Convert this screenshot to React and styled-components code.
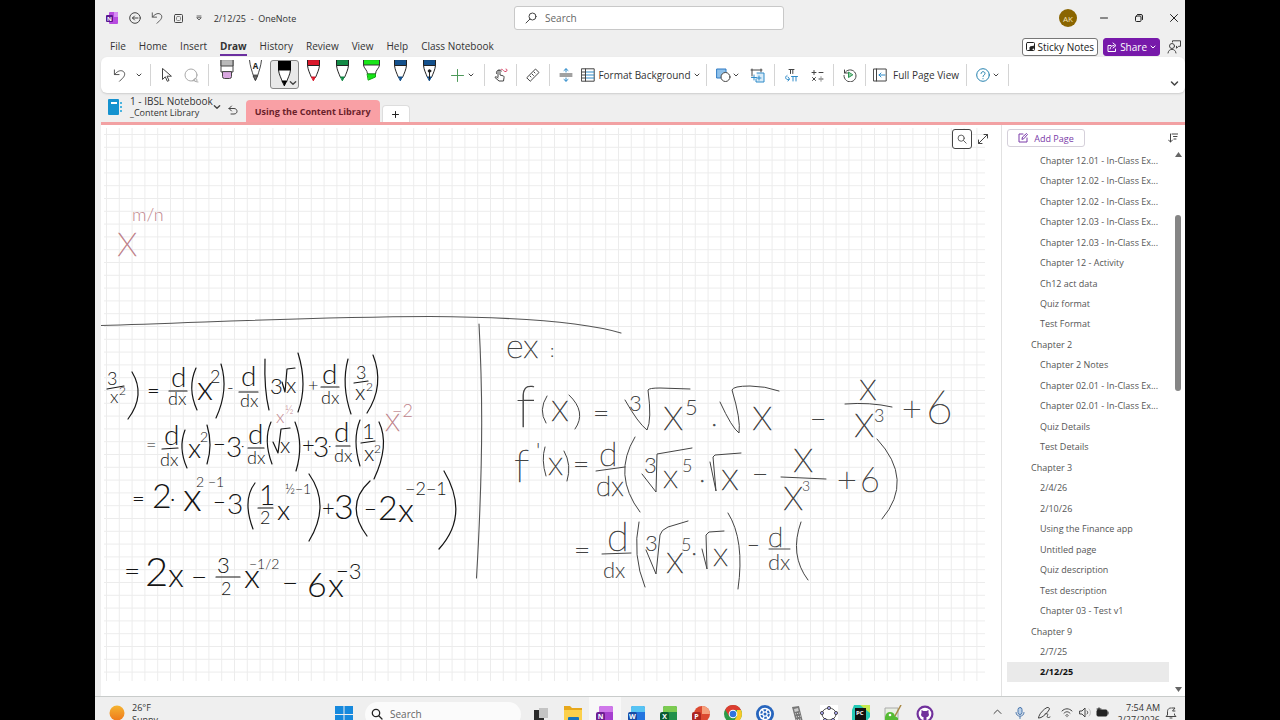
import React from 'react';
import styled, { createGlobalStyle, css } from 'styled-components';

const GlobalStyle = createGlobalStyle`
  * {
    box-sizing: border-box;
  }
  body {
    margin: 0;
    background: #000;
    color: #333;
    font-family: 'Open Sans', 'Noto Sans', sans-serif;
    font-size: 10px;
  }
  button, input {
    font: inherit;
    color: inherit;
    border: 0;
    background: none;
    padding: 0;
    margin: 0;
  }
  ul {
    list-style: none;
    margin: 0;
    padding: 0;
  }
  a {
    color: inherit;
    text-decoration: none;
  }
  svg {
    display: block;
    flex: none;
  }
`;

const Desktop = styled.div`
  height: 100vh;
  margin: 0 95px;
  display: flex;
  flex-direction: column;
  overflow: hidden;
  background: #efefef;
`;

const TitleBar = styled.header`
  height: 36px;
  display: grid;
  grid-template-columns: 419fr 270px 401fr;
  align-items: center;
`;

const TitleLeft = styled.div`
  display: flex;
  align-items: center;
  padding-left: 10px;
`;

const TitleButton = styled.button`
  width: ${(p) => p.$w || 21}px;
  height: 20px;
  display: flex;
  align-items: center;
  justify-content: center;
`;

const DocName = styled.span`
  margin-left: 4px;
  font-size: 9px;
  white-space: pre;
`;

const SearchBox = styled.label`
  height: 24px;
  display: flex;
  align-items: center;
  gap: 8px;
  padding: 0 10px;
  background: #fff;
  border: 1px solid #c8c8c8;
  border-radius: 3px;

  input {
    width: 100%;
    outline: 0;
  }
  input::placeholder {
    color: #666;
    opacity: 1;
  }
`;

const TitleRight = styled.div`
  display: flex;
  align-items: center;
  justify-content: flex-end;
  gap: 12px;
`;

const Avatar = styled.button`
  width: 18px;
  height: 18px;
  margin-right: 3px;
  border-radius: 50%;
  background: #8a6500;
  color: #f4e3b5;
  font-size: 8px;
`;

const MenuBar = styled.nav`
  height: 21px;
  display: flex;
  align-items: center;
  gap: 13px;
  padding: 0 2px 0 15px;
`;

const MenuItem = styled.a`
  padding-top: 2px;
  line-height: 15px;
  border-bottom: 2px solid transparent;
  ${(p) => p.$active && css`
    font-weight: 700;
    border-color: #6b2fa0;
  `}
`;

const MenuActions = styled.div`
  display: flex;
  align-items: center;
  gap: 5px;
  margin-left: auto;
`;

const ActionButton = styled.button`
  height: 18px;
  display: flex;
  align-items: center;
  gap: ${(p) => (p.$primary ? 3 : 2)}px;
  padding: 0 3px;
  border: 1px solid ${(p) => (p.$primary ? '#7719aa' : '#777')};
  border-radius: 3px;
  background: ${(p) => (p.$primary ? '#7719aa' : '#fff')};
  color: ${(p) => (p.$primary ? '#fff' : '#222')};
`;

const Ribbon = styled.div`
  height: 36px;
  display: flex;
  margin-left: 6px;
  padding: 0 4px 0 6px;
  background: #fff;
  border-radius: 6px;
  box-shadow: 0 1px 2px #ccc;
`;

const Tool = styled.button`
  width: ${(p) => p.$w || 26}px;
  display: flex;
  align-items: center;
  justify-content: center;
  gap: ${(p) => p.$gap || 0}px;
  white-space: nowrap;
`;

const PenTool = styled.button`
  width: 29px;
  height: 29px;
  margin-top: 3px;
  display: flex;
  justify-content: center;
  position: relative;
  ${(p) => p.$active && css`
    background: #e9e9e9;
    border: 1px solid #888;
    border-radius: 3px;
  `}
`;

const PenArrow = styled.span`
  position: absolute;
  right: 1px;
  bottom: 1px;
`;

const Separator = styled.span`
  width: 1px;
  margin: 7px 3px;
  background: #d4d4d4;
`;

const Collapse = styled.button`
  margin-left: auto;
  padding: 16px 2px 0 0;
`;

const TabStrip = styled.div`
  height: 32px;
  margin-left: 6px;
  display: flex;
  align-items: flex-end;
  border-bottom: 3px solid #f2a1a3;
`;

const Notebook = styled.button`
  height: 28px;
  display: flex;
  align-items: center;
  padding: 0 5px 2px 7px;
  text-align: left;
`;

const NotebookName = styled.span`
  display: flex;
  flex-direction: column;
  margin-left: 8px;
  line-height: 12px;

  small {
    font-size: 9px;
  }
`;

const BackButton = styled.button`
  height: 24px;
  padding: 0 8px 0 2px;
`;

const Section = styled.button`
  height: 22px;
  padding: 0 9px;
  background: #f9a0a5;
  border-radius: 4px 4px 0 0;
  color: #6b1f2b;
  font-size: 9px;
  font-weight: 700;
`;

const AddSection = styled.button`
  width: 28px;
  height: 17px;
  margin-left: 2px;
  display: flex;
  align-items: center;
  justify-content: center;
  background: #fff;
  border: 1px solid #ddd;
  border-bottom: 0;
  border-radius: 4px 4px 0 0;
`;

const Workspace = styled.main`
  flex: 1;
  min-height: 0;
  display: flex;
  margin-left: 6px;
  background: #fff;
`;

const Page = styled.section`
  flex: 1;
  min-width: 0;
  overflow: hidden;
  position: relative;
`;

const PageTools = styled.div`
  position: absolute;
  top: 4px;
  right: 12px;
  display: flex;
  align-items: center;
  gap: 5px;
`;

const FindButton = styled.button`
  width: 20px;
  height: 20px;
  display: flex;
  align-items: center;
  justify-content: center;
  background: #fff;
  border: 1px solid #444;
  border-radius: 3px;
`;

const PageList = styled.aside`
  flex: 0 0 184px;
  display: flex;
  border-left: 1px solid #e2e2e2;
`;

const PageColumn = styled.div`
  flex: 1;
  display: flex;
  flex-direction: column;
  padding: 4px 2px 14px 5px;
`;

const AddPage = styled.button`
  width: 78px;
  height: 18px;
  margin-bottom: 3px;
  display: flex;
  align-items: center;
  justify-content: center;
  gap: 6px;
  border: 1px solid #d5d0da;
  border-radius: 3px;
  color: #7a3aa8;
  font-size: 9px;
`;

const Pages = styled.ul`
  flex: 1;
  display: flex;
  flex-direction: column;
`;

const PageItem = styled.li`
  flex: 1 1 20px;
  display: flex;
  align-items: center;
  padding-left: ${(p) => (p.$level ? 33 : 24)}px;
  font-size: 9px;
  color: #555;
  white-space: nowrap;
  ${(p) => p.$active && css`
    background: #eaeaea;
    color: #111;
    font-weight: 700;
  `}
`;

const ScrollColumn = styled.div`
  width: 14px;
  display: flex;
  flex-direction: column;
  align-items: center;
  padding: 8px 0 4px;
`;

const SortButton = styled.button`
  align-self: flex-end;
  padding-right: 7px;
  margin-bottom: 9px;
`;

const ScrollTrack = styled.div`
  flex: 1;
  padding-top: 58px;
`;

const ScrollThumb = styled.div`
  width: 6px;
  height: 34%;
  min-height: 176px;
  border-radius: 3px;
  background: #858585;
`;

const Taskbar = styled.footer`
  flex: 0 0 24px;
  display: flex;
  align-items: flex-start;
  overflow: hidden;
  border-top: 1px solid #c9cccb;
  background: #efefef;
`;

const Weather = styled.button`
  display: flex;
  gap: 7px;
  padding: 5px 0 0 14px;
  width: 233px;
  text-align: left;
  font-size: 9px;
  line-height: 12px;

  svg {
    margin-top: 3px;
  }
  span span {
    display: block;
  }
`;

const TaskSearch = styled.label`
  width: 156px;
  height: 25px;
  margin: 5px 4px 0 5px;
  display: flex;
  align-items: center;
  gap: 7px;
  padding: 0 6px 2px;
  border-radius: 13px;
  background: #fbfbfb;

  input {
    width: 100%;
    outline: 0;
  }
  input::placeholder {
    color: #666;
    opacity: 1;
  }
`;

const TaskButton = styled.button`
  width: 32px;
  padding-top: 8px;
  display: flex;
  justify-content: center;
  background: ${(p) => (p.$active ? '#f8f8f8' : 'none')};
`;

const Tray = styled.div`
  margin-left: auto;
  display: flex;
  padding-right: 4px;
`;

const TrayButton = styled.button`
  width: ${(p) => p.$w || 18}px;
  padding-top: 10px;
  display: flex;
  justify-content: center;
`;

const Clock = styled.button`
  width: 48px;
  padding-top: 5px;
  text-align: right;
  font-size: 9px;
  line-height: 12px;

  span {
    display: block;
  }
`;

const Icon = ({ w = 16, h = w, box = `0 0 ${w} ${h}`, color = '#444', sw = 1, children }) => (
  <svg width={w} height={h} viewBox={box} fill="none" stroke={color} strokeWidth={sw} strokeLinecap="round" strokeLinejoin="round" aria-hidden="true">
    {children}
  </svg>
);

const Chevron = ({ size = 6, color = '#444' }) => (
  <Icon w={size} box="0 0 6 6" color={color}><path d="M1 2l2 2 2-2" /></Icon>
);

const Undo = ({ size = 13 }) => (
  <Icon w={size} box="0 0 14 14"><path d="M1.500 1V6h5M1.800 5.800C4 3 7.500.8 10.500 2.300c3 1.600 2.600 5-.3 7.700L7 13.200" /></Icon>
);

const Magnifier = ({ size = 12, color = '#444', sw = 1, flip }) => (
  <Icon w={size} box="0 0 12 12" color={color} sw={sw}>
    {flip ? <><circle cx="7.500" cy="4.500" r="3.500" /><path d="M5 7L1 11" /></> : <><circle cx="5" cy="5" r="3.700" /><path d="M8 8l3 3" /></>}
  </Icon>
);

const Pen = ({ color, label, fountain }) => (
  <PenTool aria-label={label}>
    <Icon w={15} h={23} color="#222">
      <path d="M1.500 0v5.500c.5 4.500 2.600 8.500 4 12h4c1.400-3.500 3.500-7.500 4-12V0" fill="#fff" />
      <path d="M1.500 0v5.500h12V0z" fill={color} />
      <path d="M5.800 17h3.400L7.500 20.500z" fill={color} stroke={color} />
      {fountain && <><circle cx="7.500" cy="11" r="1.300" fill="#222" /><path d="M7.500 11v8" /></>}
    </Icon>
  </PenTool>
);

// [x, baseline, size, content]
const leftInk = [
  [107, 385, 18, '3'], [110, 403, 18, 'x'], [119, 395, 12, '2'], [147, 398, 22, '='],
  [171, 387, 28, 'd'], [168, 405, 18, 'dx'], [197, 400, 34, 'x'], [210, 383, 18, '2'],
  [227, 394, 18, '-'], [241, 386, 28, 'd'], [240, 407, 18, 'dx'], [270, 394, 22, '3'],
  [286, 393, 22, 'x'], [308, 391, 18, '+'], [322, 384, 28, 'd'], [321, 404, 18, 'dx'],
  [356, 379, 18, '3'], [355, 400, 22, 'x'], [366, 391, 12, '2'],
  [146, 451, 18, '='], [164, 445, 28, 'd'], [160, 466, 18, 'dx'], [188, 458, 28, 'x'],
  [200, 442, 14, '2'], [213, 452, 22, '−'], [226, 457, 28, '3'], [241, 451, 14, '·'],
  [248, 444, 28, 'd'], [247, 464, 18, 'dx'], [280, 453, 22, 'x'], [302, 453, 22, '+'],
  [313, 457, 28, '3'], [328, 451, 14, '·'], [334, 442, 28, 'd'], [334, 462, 18, 'dx'],
  [362, 439, 22, '1'], [364, 461, 22, 'x'], [374, 453, 12, '2'],
  [132, 506, 22, '='], [152, 508, 34, '2'], [170, 506, 22, '·'], [183, 511, 40, 'x'],
  [196, 487, 14, '2 −1'], [213, 510, 22, '−'], [227, 514, 28, '3'], [259, 505, 28, '1'],
  [260, 524, 18, '2'], [277, 520, 28, 'x'], [285, 494, 14, '½−1'], [322, 516, 22, '+'],
  [334, 519, 34, '3'], [364, 517, 22, '−'], [378, 520, 34, '2'], [398, 522, 34, 'x'],
  [405, 495, 18, '−2−1'],
  [124, 581, 28, '='], [145, 586, 40, '2'], [168, 587, 34, 'x'], [191, 587, 28, '−'],
  [217, 573, 22, '3'], [221, 595, 18, '2'], [244, 588, 34, 'x'], [249, 569, 14, '−1/2'],
  [282, 593, 28, '−'], [307, 597, 34, '6'], [328, 597, 34, 'x'], [336, 579, 22, '−3'],
];

const rightInk = [
  [506, 358, 34, 'ex'], [550, 357, 18, ':'],
  [516, 427, 58, 'f'], [551, 421, 40, 'x'], [593, 423, 28, '='], [629, 411, 22, '3'],
  [663, 430, 46, 'x'], [685, 415, 22, '5'], [711, 426, 28, '.'], [752, 430, 46, 'x'],
  [810, 429, 28, '−'], [859, 400, 40, 'x'], [854, 437, 46, 'x'], [874, 422, 18, '3'],
  [902, 421, 34, '+'], [926, 424, 46, '6'],
  [514, 482, 46, 'f'], [536, 458, 22, "'"], [548, 475, 34, 'x'], [573, 474, 28, '='],
  [599, 466, 34, 'd'], [596, 496, 28, 'dx'], [644, 473, 22, '3'], [663, 488, 34, 'x'],
  [682, 472, 18, '5'], [699, 482, 28, '.'], [721, 490, 40, 'x'], [752, 484, 28, '−'],
  [793, 472, 46, 'x'], [783, 510, 46, 'x'], [802, 491, 14, '3'], [837, 492, 34, '+'],
  [860, 492, 34, '6'],
  [574, 560, 28, '='], [607, 551, 40, 'd'], [603, 578, 22, 'dx'], [645, 551, 22, '3'],
  [666, 573, 40, 'x'], [681, 551, 18, '5'], [691, 562, 28, '·'], [713, 566, 34, 'x'],
  [747, 553, 22, '−'], [768, 547, 28, 'd'], [768, 570, 22, 'dx'],
];

const leftStrokes = [
  'M132 372Q146 395 128 419', 'M107 389l17-3', 'M169 391h18', 'M196 368Q187 388 197 410',
  'M221 364Q229 390 216 418', 'M239 392h19', 'M265 359Q264 390 269 410',
  'M282 382l3 10 2-23 8-1', 'M298 353Q308 385 298 412', 'M321 387h18', 'M348 359Q341 385 351 414',
  'M354 383l14-2', 'M373 355Q385 385 367 413',
  'M162 449l16-1', 'M185 430Q178 448 187 468', 'M207 425Q213 445 207 464', 'M248 448h16',
  'M271 422Q263 440 272 464', 'M273 442l5 11 3-24 9-1', 'M295 422Q304 445 296 471',
  'M336 446h14', 'M360 420Q352 440 360 466', 'M361 443l14-2', 'M379 422Q390 445 374 479',
  'M255 483Q242 500 253 529', 'M258 508h15', 'M309 474Q331 505 309 541',
  'M370 481Q344 505 367 536', 'M444 471Q470 515 439 549', 'M216 577h24',
];

const rightStrokes = [
  'M547 396Q538 410 546 423', 'M569 395Q587 412 575 429',
  'M625 400Q638 423 647 430 652 420 648 390q1-2 12-2l30 1',
  'M720 402Q732 428 739 433 741 420 732 390q1-4 18-4 15 0 29 5', 'M845 404Q870 402 892 407',
  'M545 447Q541 460 546 476', 'M564 451Q572 465 567 481', 'M596 471l29-4',
  'M635 437Q612 475 640 512', 'M642 474l14 18 1-38 35-6', 'M710 462l6 29-3-34 2-2 26-2',
  'M781 477l45 2', 'M877 439Q915 480 882 519',
  'M602 554l29-1', 'M639 522Q632 555 645 587', 'M646 550l10 24 4-39q1-5 8-8l20-6',
  'M728 513Q745 540 738 589', 'M702 549l5 20-1-34 3-3 15-1', 'M769 549h21',
  'M801 522Q789 555 808 580',
];

// the hairline cut is too faint alone, so large letters get a pen-width stroke
const InkText = styled.text`
  font-family: Lato, 'Open Sans', sans-serif;
  font-weight: ${(p) => (p.$thin ? 100 : 300)};
  stroke-width: ${(p) => (p.$thin ? 0.6 : 0)};
`;

const InkLayer = ({ color, texts, strokes = [], width = 1.3, thinFrom = 46 }) => (
  <g fill={color} stroke={color}>
    {texts.map(([x, y, size, content]) => (
      <InkText key={`${x}-${y}`} x={x} y={y} fontSize={size} $thin={size >= thinFrom}>{content}</InkText>
    ))}
    <g fill="none" strokeWidth={width} strokeLinecap="round" strokeLinejoin="round">
      {strokes.map((d) => <path key={d} d={d} />)}
    </g>
  </g>
);

const Canvas = () => (
  <svg width="884" height="556" viewBox="101 125 884 556" role="img" aria-label="Handwritten notes">
    <defs>
      <pattern id="grid" x="106" y="134" width="12.800" height="12.800" patternUnits="userSpaceOnUse">
        <path d="M.5 0v12.800M0 .5h12.800" stroke="#ececec" strokeWidth="1" />
      </pattern>
    </defs>
    <rect x="104" y="128" width="881" height="553" fill="url(#grid)" />
    <g fill="none" stroke="#555" strokeWidth="1.100" strokeLinecap="round">
      <path d="M101 325.500C200 323 300 317 430 316.500 500 317 580 321 621 333" />
      <path d="M479 324C482 380 484 450 476.500 578" />
    </g>
    <InkLayer color="#c0848c" thinFrom={28} texts={[[132, 221, 18, 'm/n'], [117, 256, 46, 'x'], [276, 423, 18, 'x'], [285, 414, 12, '½'], [385, 431, 34, 'x'], [392, 417, 18, '−2']]} />
    <InkLayer color="#151515" texts={leftInk} strokes={leftStrokes} width={1.2} />
    <InkLayer color="#444" thinFrom={28} texts={rightInk} strokes={rightStrokes} width={1} />
  </svg>
);

const pages = [
  ['Chapter 12.01 - In-Class Ex...', 1], ['Chapter 12.02 - In-Class Ex...', 1],
  ['Chapter 12.02 - In-Class Ex...', 1], ['Chapter 12.03 - In-Class Ex...', 1],
  ['Chapter 12.03 - In-Class Ex...', 1], ['Chapter 12 - Activity', 1],
  ['Ch12 act data', 1], ['Quiz format', 1], ['Test Format', 1],
  ['Chapter 2', 0], ['Chapter 2 Notes', 1], ['Chapter 02.01 - In-Class Ex...', 1],
  ['Chapter 02.01 - In-Class Ex...', 1], ['Quiz Details', 1], ['Test Details', 1],
  ['Chapter 3', 0], ['2/4/26', 1], ['2/10/26', 1], ['Using the Finance app', 1],
  ['Untitled page', 1], ['Quiz description', 1], ['Test description', 1],
  ['Chapter 03 - Test v1', 1], ['Chapter 9', 0], ['2/7/25', 1], ['2/12/25', 1],
];

const menus = ['File', 'Home', 'Insert', 'Draw', 'History', 'Review', 'View', 'Help', 'Class Notebook'];

const OfficeIcon = ({ letter, dark, mid, light, round }) => (
  <svg width="18" height="20" viewBox="0 0 18 20" aria-hidden="true">
    {round ? (
      <>
        <circle cx="10" cy="9" r="8" fill={mid} />
        <path d="M10 1a8 8 0 0 1 8 8h-8z" fill={light} />
      </>
    ) : (
      <>
        <rect x="3" y="1" width="14" height="17" rx="2" fill={mid} />
        <path d="M5 1h10a2 2 0 0 1 2 2v4H3V3a2 2 0 0 1 2-2z" fill={light} />
      </>
    )}
    <rect x="0" y="7" width="9" height="9" rx="2" fill={dark} />
    <text x="4.500" y="14" textAnchor="middle" fontSize="7" fontWeight="700" fill="#fff">{letter}</text>
  </svg>
);

const TitleRow = () => (
  <TitleBar>
    <TitleLeft>
      <TitleButton $w={14} aria-label="OneNote">
        <svg width="12" height="12" viewBox="0 0 12 12" aria-hidden="true">
          <rect x="3" y="0" width="9" height="12" rx="1" fill="#b84be0" />
          <path d="M8 0h3a1 1 0 0 1 1 1v4H8z" fill="#d68cf3" />
          <rect x="0" y="3" width="7" height="7" rx="1" fill="#5b1590" />
          <text x="3.500" y="9" textAnchor="middle" fontSize="6" fontWeight="700" fill="#fff">N</text>
        </svg>
      </TitleButton>
      <TitleButton $w={32} aria-label="Back">
        <Icon w={12}><circle cx="6" cy="6" r="5.300" /><path d="M9 6H3.500M5.500 4l-2 2 2 2" /></Icon>
      </TitleButton>
      <TitleButton $w={12} aria-label="Undo"><Undo size={12} /></TitleButton>
      <TitleButton $w={30} aria-label="Full page">
        <Icon w={9}><rect x=".5" y=".5" width="8" height="8" rx="1" /><rect x="2.500" y="2.500" width="4" height="4" rx="1" stroke="#888" /></Icon>
      </TitleButton>
      <TitleButton $w={12} aria-label="Customize toolbar">
        <Icon w={6} sw={0.8}><path d="M1 1h4M1 3l2 2 2-2z" /></Icon>
      </TitleButton>
      <DocName>{'  2/12/25  -  OneNote'}</DocName>
    </TitleLeft>
    <SearchBox>
      <Magnifier flip />
      <input type="search" placeholder="Search" aria-label="Search" />
    </SearchBox>
    <TitleRight>
      <Avatar>AK</Avatar>
      <TitleButton $w={23} aria-label="Minimize"><Icon w={8} color="#222"><path d="M.5 4h7" /></Icon></TitleButton>
      <TitleButton $w={23} aria-label="Restore">
        <Icon w={8} color="#222"><rect x=".5" y="2" width="5.500" height="5.500" rx="1" /><path d="M2.500.5H6a1.500 1.500 0 0 1 1.500 1.500v3.500" /></Icon>
      </TitleButton>
      <TitleButton $w={23} aria-label="Close"><Icon w={8} color="#222"><path d="M.5.5l7 7M7.500.5l-7 7" /></Icon></TitleButton>
    </TitleRight>
  </TitleBar>
);

const MenuRow = () => (
  <MenuBar>
    {menus.map((name) => <MenuItem key={name} href="#" $active={name === 'Draw'}>{name}</MenuItem>)}
    <MenuActions>
      <ActionButton>
        <Icon w={9} color="#222"><rect x=".5" y=".5" width="8" height="8" rx="1" /><path d="M4 8.500V5l4.500-1v1L5 8.500z" fill="#222" /></Icon>
        Sticky Notes
      </ActionButton>
      <ActionButton $primary>
        <Icon w={10} color="#fff"><path d="M4 3.500H1v6h7.500V7M3 7c.3-2.500 2-3.500 4-3.500M6 1l3 2.500L6 6" /></Icon>
        Share
        <Chevron color="#fff" />
      </ActionButton>
      <TitleButton $w={18} aria-label="Contact">
        <Icon w={14}><circle cx="5" cy="6" r="2.500" /><path d="M1 13c.5-5 7.500-5 8 0M5.500 2V.8h8v5.500h-2l-2 2v-2" /></Icon>
      </TitleButton>
    </MenuActions>
  </MenuBar>
);

const DrawRibbon = () => (
  <Ribbon>
    <Tool $w={24} aria-label="Undo"><Undo /></Tool>
    <Tool $w={16} aria-label="Undo options"><Chevron /></Tool>
    <Separator />
    <Tool $w={24} aria-label="Select">
      <Icon w={11} h={14}><path d="M1.500.8v10.700l2.800-2.700 2 4.500 1.700-.8-2-4.300h4z" /></Icon>
    </Tool>
    <Tool $w={27} aria-label="Lasso">
      <Icon w={15} color="#aaa"><circle cx="7" cy="7" r="6" /><path d="M9 13c0-3 4-3 4-1s-3 2-3 0c1 1 2 2 4 2" /></Icon>
    </Tool>
    <Separator />
    <PenTool aria-label="Eraser">
      <Icon w={14} h={20} color="#444">
        <path d="M1 0v12h12V0z" fill="#fff" /><path d="M1 0v6h12V0z" fill="#b9b9b9" /><path d="M2.500 12v4.500q0 2 2 2h5q2 0 2-2V12z" fill="#d9a7e0" />
      </Icon>
    </PenTool>
    <PenTool aria-label="Text pen">
      <Icon w={15} h={22} color="#444">
        <path d="M1.500 0C2 6 4 11 5.500 16h4c1.500-5 3.500-10 4-16M5.500 15.500l2 5 2-5z" />
        <path d="M5.500 16h4l-2 4z" fill="#777" />
        <text x="7.500" y="9" textAnchor="middle" fontSize="8" fontWeight="700" fill="#222" stroke="none">A</text>
      </Icon>
    </PenTool>
    <PenTool $active aria-label="Black pen">
      <Icon w={15} h={26} color="#222">
        <path d="M1.500 0v9c.5 4.500 2.600 8 4 12h4c1.400-4 3.500-7.500 4-12V0" fill="#fff" />
        <path d="M1.500 0v9h12V0zM5.500 20h4l-2 4.500z" fill="#000" stroke="#000" />
      </Icon>
      <PenArrow><Chevron size={8} /></PenArrow>
    </PenTool>
    <Pen color="#d9182b" label="Red pen" />
    <Pen color="#128a45" label="Green pen" />
    <PenTool aria-label="Highlighter">
      <Icon w={19} h={22} color="#333">
        <path d="M1.500 0v5c0 3 4 5 4 9h8c0-4 4-6 4-9V0" fill="#fff" />
        <path d="M1.500 0v5h16V0z" fill="#17e617" /><path d="M5.500 14h8v3l-7 3z" fill="#17e617" stroke="#12a812" />
      </Icon>
    </PenTool>
    <Pen color="#13508c" label="Blue pen" />
    <Pen color="#13508c" label="Fountain pen" fountain />
    <Tool $w={37} $gap={4} aria-label="Add pen">
      <Icon w={13} color="#4e9a5a"><path d="M6.500.5v12M.5 6.500h12" /></Icon><Chevron />
    </Tool>
    <Separator />
    <Tool $w={25} aria-label="Draw with touch">
      <Icon w={14}>
        <path d="M4 9V3.500c0-1.500 2-1.500 2 0V7l3 .8c1 .3 1.300 1 1 2L9.500 13H5L1 9.500c0-1 1-1.300 3 .5M2.500 5.500c-1-3 3-5 5-2.500" />
        <path d="M7 1.500C9 0 9 4 12 3.500c1.500-.5 1.500-2.500 0-2.500" stroke="#d8476a" />
      </Icon>
    </Tool>
    <Separator />
    <Tool $w={26} aria-label="Ruler">
      <Icon w={14}><path d="M1 9.500L9.500 1 13 4.500 4.500 13zM4 8l1 1M6 6l1.500 1.500M8 4l1 1" /></Icon>
    </Tool>
    <Separator />
    <Tool $w={25} aria-label="Insert space">
      <Icon w={14}><path d="M1 6h12M1 8h12" /><path d="M7 4V.8M5 2.500L7 .8l2 1.700M7 10v3.200M5 11.500l2 1.700 2-1.700" stroke="#2e8bc9" /></Icon>
    </Tool>
    <Tool $w={125} $gap={3}>
      <Icon w={14}><path d="M.8.8h12.400v12.400H.8z" /><path d="M5 4h8M5 7h8M5 10h8" stroke="#2e8bc9" /><path d="M4.500 1v12M1 4h3M1 7h3M1 10h3" /></Icon>
      Format Background
      <Chevron />
    </Tool>
    <Separator />
    <Tool $w={34} $gap={2} aria-label="Shapes">
      <Icon w={15}><path d="M1 1h9v4L5 10H1z" fill="#8fc1ea" stroke="#2e7bc4" /><circle cx="9.500" cy="9" r="4.500" fill="#fff" /></Icon><Chevron />
    </Tool>
    <Tool $w={27} aria-label="Ink to shape">
      <Icon w={15}><path d="M2 1v7M1 2h11M11 1v3" /><path d="M7 5h7v9H6v-3" fill="#d8ebf8" stroke="#2e8bc9" /><path d="M4 7v5M1.500 9.500h5M9 8v4M7 10h4" stroke="#2e8bc9" /></Icon>
    </Tool>
    <Separator />
    <Tool $w={26} aria-label="Ink to math">
      <Icon w={14}>
        <path d="M5 1.500h5M6.500 1.500v4M8.800 1.500v4" />
        <path d="M7.500 8.500h6M9 8.500V13M12 8.500V13M3 7.500c-3 1.500-1 5 2 4M4 9l1.500 2L4 13" stroke="#2e8bc9" />
      </Icon>
    </Tool>
    <Tool aria-label="Math">
      <Icon w={13}><path d="M1 3.500h4M3 1.500v4M8 3.500h4M1.500 8.500l3 3M4.500 8.500l-3 3M8 10h4M10 8v.2M10 11.800v.2" /></Icon>
    </Tool>
    <Separator />
    <Tool $w={25} aria-label="Ink replay">
      <Icon w={14}><path d="M1.500 2v3h3M1.700 5A6 6 0 1 1 1 7.500" /><path d="M5.500 4.500v5l4-2.500z" fill="#8fd0a5" stroke="#2c9450" /></Icon>
    </Tool>
    <Separator />
    <Tool $w={94} $gap={6}>
      <Icon w={14}><path d="M.8 1h12.400v12H.8zM3.500 1v12" /><path d="M12 7H6M8 5L6 7l2 2" stroke="#2e8bc9" /></Icon>
      Full Page View
    </Tool>
    <Separator />
    <Tool $w={35} $gap={3} aria-label="Help">
      <Icon w={14} color="#2481ae"><circle cx="7" cy="7" r="6.300" /><path d="M5 5.500C5 3 9 3 9 5.500 9 7 7 7 7 8.500M7 10.600v.2" /></Icon><Chevron />
    </Tool>
    <Separator />
    <Collapse aria-label="Collapse ribbon"><Chevron size={9} /></Collapse>
  </Ribbon>
);

const SectionTabs = () => (
  <TabStrip>
    <Notebook>
      <Icon w={14} h={16} color="none">
        <rect x="0" y="0" width="11" height="16" rx="1" fill="#1592cf" />
        <rect x="3" y="3" width="6" height="2" fill="#fff" />
        <path d="M12 3h2v2h-2zM12 7h2v2h-2zM12 11h2v2h-2z" fill="#4ab4df" />
      </Icon>
      <NotebookName>1 - IBSL Notebook<small>_Content Library</small></NotebookName>
      <Chevron size={8} />
    </Notebook>
    <BackButton aria-label="Previous section">
      <Icon w={10}><path d="M3.500 1L1 3.500 3.500 6M1 3.500h5c4 0 4 5.500 0 5.500H3" /></Icon>
    </BackButton>
    <Section>Using the Content Library</Section>
    <AddSection aria-label="Add section"><Icon w={7} color="#222"><path d="M3.500.5v6M.5 3.500h6" /></Icon></AddSection>
  </TabStrip>
);

const Arrow = ({ up }) => (
  <svg width="7" height="5" viewBox="0 0 7 5" aria-hidden="true"><path d={up ? 'M0 5L3.500 0 7 5z' : 'M0 0l3.500 5L7 0z'} fill="#666" /></svg>
);

const Sidebar = () => (
  <PageList>
    <PageColumn>
      <AddPage>
        <Icon w={10} color="#7a3aa8"><path d="M5 1H1v8h8V5M4 6l.5-2L8.500.5l1 1L6 5.500z" /></Icon>
        Add Page
      </AddPage>
      <Pages>
        {pages.map(([name, level], i) => (
          <PageItem key={i} $level={level} $active={i === pages.length - 1}><a href="#">{name}</a></PageItem>
        ))}
      </Pages>
    </PageColumn>
    <ScrollColumn>
      <SortButton aria-label="Sort pages">
        <Icon w={10}><path d="M2.500 1v8M.5 7l2 2 2-2M4 1h6M5.500 3.500H9M6 6h2" /></Icon>
      </SortButton>
      <Arrow up />
      <ScrollTrack><ScrollThumb /></ScrollTrack>
      <Arrow />
    </ScrollColumn>
  </PageList>
);

const WindowsTaskbar = () => (
  <Taskbar>
    <Weather>
      <svg width="16" height="16" viewBox="0 0 16 16" aria-hidden="true">
        <defs><linearGradient id="sun" x2="0" y2="1"><stop stopColor="#f5b431" /><stop offset="1" stopColor="#ef7a1c" /></linearGradient></defs>
        <circle cx="8" cy="8" r="7.500" fill="url(#sun)" />
      </svg>
      <span><span>26°F</span><span>Sunny</span></span>
    </Weather>
    <TaskButton aria-label="Start">
      <svg width="18" height="18" viewBox="0 0 18 18" aria-hidden="true"><path d="M0 1h8.500v8H0zM9.500 1H18v8H9.500zM0 10h8.500v8H0zM9.500 10H18v8H9.500z" fill="#1689dd" /></svg>
    </TaskButton>
    <TaskSearch>
      <Magnifier color="#222" sw={1.3} />
      <input type="search" placeholder="Search" aria-label="Search the desktop" />
    </TaskSearch>
    <TaskButton aria-label="Task view">
      <svg width="14" height="18" viewBox="0 0 14 18" aria-hidden="true"><path d="M0 5h10v12H0z" fill="#2b2b2b" /><path d="M5 3h9v10H5z" fill="#c4c4c4" /></svg>
    </TaskButton>
    <TaskButton aria-label="File Explorer">
      <svg width="18" height="18" viewBox="0 0 18 18" aria-hidden="true"><path d="M0 1h6l2 2h10v15H0z" fill="#e7a81c" /><path d="M0 5h18v13H0z" fill="#fbd04b" /><rect x="4" y="12" width="11" height="6" rx="1" fill="#1674bd" /></svg>
    </TaskButton>
    <TaskButton $active aria-label="OneNote"><OfficeIcon letter="N" dark="#6d1d92" mid="#a63fd0" light="#cf78ea" /></TaskButton>
    <TaskButton aria-label="Word"><OfficeIcon letter="W" dark="#164ba6" mid="#2374df" light="#56c3f3" /></TaskButton>
    <TaskButton aria-label="Excel"><OfficeIcon letter="X" dark="#0b5c31" mid="#21904a" light="#7ccb51" /></TaskButton>
    <TaskButton aria-label="PowerPoint"><OfficeIcon letter="P" dark="#ad2520" mid="#dc4930" light="#f5a07c" round /></TaskButton>
    <TaskButton aria-label="Chrome">
      <svg width="18" height="18" viewBox="0 0 18 18" aria-hidden="true">
        <circle cx="9" cy="9" r="9" fill="#2c9b47" /><path d="M1.200 4.500A9 9 0 0 1 17 5H9L5 11z" fill="#dc3d30" /><path d="M17 5a9 9 0 0 1-8 13l4-7V5z" fill="#f7c928" /><circle cx="9" cy="9" r="4.300" fill="#fff" /><circle cx="9" cy="9" r="3.300" fill="#2f73dd" />
      </svg>
    </TaskButton>
    <TaskButton aria-label="Remote">
      <svg width="18" height="18" viewBox="0 0 18 18" aria-hidden="true">
        <circle cx="9" cy="9" r="9" fill="#2765bd" /><circle cx="9" cy="9" r="6.200" fill="#fff" /><circle cx="9" cy="9" r="3.800" fill="none" stroke="#2765bd" strokeWidth="2" strokeDasharray="2.600 1.400" /><circle cx="9" cy="9" r="1.500" fill="#2765bd" />
      </svg>
    </TaskButton>
    <TaskButton aria-label="Calculator">
      <svg width="16" height="18" viewBox="0 0 16 18" aria-hidden="true"><path d="M3 2l7-1 4 16H7z" fill="#777" /><path d="M5 4l4-1 .8 3-4 1z" fill="#ccc" /><path d="M6 9l5-1M7 12l5-1M7 15l5-1" stroke="#ddd" strokeDasharray="1 1" /></svg>
    </TaskButton>
    <TaskButton aria-label="GeoGebra">
      <svg width="18" height="18" viewBox="0 0 18 18" aria-hidden="true">
        <path d="M0 0h18v18H0z" fill="#fff" /><ellipse cx="9" cy="9" rx="7" ry="6" fill="none" stroke="#555" />
        {[[9, 3], [16, 8], [13, 15], [5, 15], [2, 8]].map(([x, y]) => <circle key={x} cx={x} cy={y} r="1.600" fill="#a9a6ef" stroke="#333" strokeWidth=".8" />)}
      </svg>
    </TaskButton>
    <TaskButton aria-label="PyCharm">
      <svg width="18" height="18" viewBox="0 0 18 18" aria-hidden="true"><path d="M2 0h16v12l-5 6H0V5z" fill="#25c9b5" /><path d="M8 0h10v8z" fill="#c6e94f" /><path d="M3 3h11v12H3z" fill="#111" /><text x="4" y="10" fontSize="6" fontWeight="700" fill="#fff">PC</text></svg>
    </TaskButton>
    <TaskButton aria-label="Notepad++">
      <svg width="18" height="18" viewBox="0 0 18 18" aria-hidden="true"><path d="M1 3h13v14H1z" fill="#e8efe3" stroke="#aaa" /><path d="M1 12q1-5 5-5t5 4l3 2v5H1z" fill="#56bb35" /><circle cx="6" cy="10" r="1.300" fill="#fff" /><path d="M17 0l-6 11" stroke="#a88743" strokeWidth="1.500" /></svg>
    </TaskButton>
    <TaskButton aria-label="GitHub">
      <svg width="18" height="18" viewBox="0 0 18 18" aria-hidden="true"><circle cx="9" cy="9" r="8.500" fill="#71319c" /><circle cx="9" cy="9" r="6.300" fill="#fff" /><path d="M5.500 5l2 1h3l2-1v3c1.500 3-1 4-2 4v4h-3v-4c-1 0-3.500-1-2-4z" fill="#71319c" /></svg>
    </TaskButton>
    <Tray>
      <TrayButton $w={22} aria-label="Hidden icons"><Icon w={9}><path d="M1 6.500l3.500-3.500L8 6.500" /></Icon></TrayButton>
      <TrayButton $w={24} aria-label="Microphone"><Icon w={10} h={12} color="#4976ad"><rect x="3" y=".5" width="4" height="7" rx="2" fill="#bdd2e9" /><path d="M1 5.500c0 5 8 5 8 0M5 9.500v2" /></Icon></TrayButton>
      <TrayButton $w={24} aria-label="Pen menu"><Icon w={13} h={12}><path d="M1 9c1-3 5-7 8-8.500 2-.5 3 1 2 2.500C9 6 6 9 3 10.500L.8 11zM7 7c2-1 3.500 0 2.500 1.500s0 3 2.500 1.500" /></Icon></TrayButton>
      <TrayButton $w={21} aria-label="Wi-Fi"><Icon w={12} h={11}><path d="M1 4c3-3 7-3 10 0M3 6.200c2-2 4-2 6 0M4.800 8.300c1-.8 1.400-.8 2.400 0M6 9.500v.2" /></Icon></TrayButton>
      <TrayButton $w={15} aria-label="Volume"><Icon w={12} h={11}><path d="M1 4h2l3-3v9L3 7H1zM8 4c1 1 1 2 0 3" /><path d="M10 2c2 2 2 5 0 7" stroke="#bbb" /></Icon></TrayButton>
      <TrayButton $w={20} aria-label="Battery"><Icon w={13} h={11} color="#222"><rect x="1" y="3" width="10" height="6" rx="1" fill="#222" /><path d="M12 5v2M3 .8v3M1 2h4" /></Icon></TrayButton>
      <Clock><span>7:54 AM</span><span>2/27/2026</span></Clock>
      <TrayButton $w={21} aria-label="Notifications"><Icon w={12}><path d="M6 1C3 1 2.500 3 2.500 5v3L1 9.500h10L9.500 8V7M5 11h2M7 1h3L7.500 4H10" /></Icon></TrayButton>
    </Tray>
  </Taskbar>
);

function App() {
  return (
    <>
      <GlobalStyle />
      <Desktop>
        <TitleRow />
        <MenuRow />
        <DrawRibbon />
        <SectionTabs />
        <Workspace>
          <Page>
            <Canvas />
            <PageTools>
              <FindButton aria-label="Find on page"><Magnifier size={10} /></FindButton>
              <button aria-label="Expand page"><Icon w={12}><path d="M1.500 10.500l9-9M7 1.500h3.500V5M1.500 7v3.500H5" /></Icon></button>
            </PageTools>
          </Page>
          <Sidebar />
        </Workspace>
        <WindowsTaskbar />
      </Desktop>
    </>
  );
}

export default App;
